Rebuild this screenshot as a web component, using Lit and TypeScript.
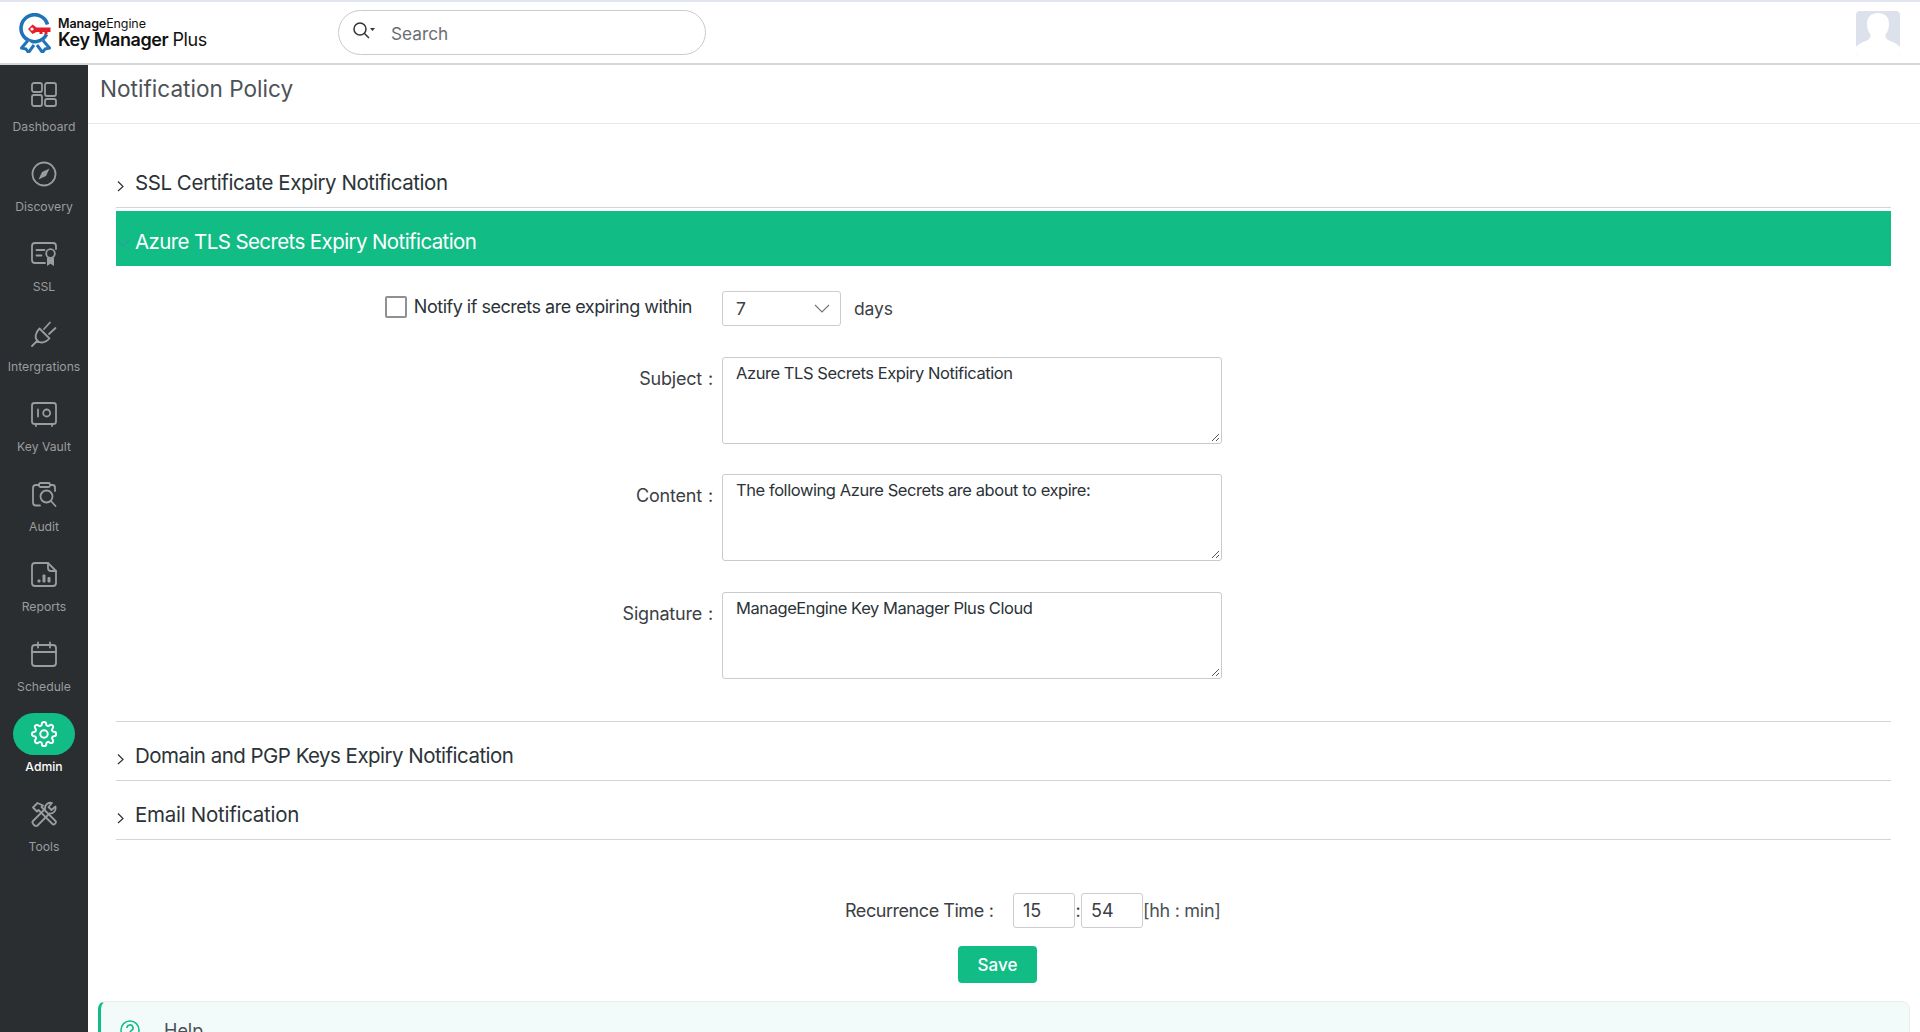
import { LitElement, html, css, svg } from "lit";
import { customElement } from "lit/decorators.js";

const gear = svg`<g transform="translate(2.8 2.8) scale(1.1)"><circle cx="12" cy="12" r="3.4"/><path d="M19.4 15a1.65 1.65 0 0 0 .33 1.82l.06.06a2 2 0 0 1 0 2.83 2 2 0 0 1-2.83 0l-.06-.06a1.65 1.65 0 0 0-1.82-.33 1.65 1.65 0 0 0-1 1.51V21a2 2 0 0 1-2 2 2 2 0 0 1-2-2v-.09A1.65 1.65 0 0 0 9 19.4a1.65 1.65 0 0 0-1.82.33l-.06.06a2 2 0 0 1-2.83 0 2 2 0 0 1 0-2.83l.06-.06a1.65 1.65 0 0 0 .33-1.82 1.65 1.65 0 0 0-1.51-1H3a2 2 0 0 1-2-2 2 2 0 0 1 2-2h.09A1.65 1.65 0 0 0 4.6 9a1.65 1.65 0 0 0-.33-1.82l-.06-.06a2 2 0 0 1 0-2.83 2 2 0 0 1 2.83 0l.06.06a1.65 1.65 0 0 0 1.82.33H9a1.65 1.65 0 0 0 1-1.51V3a2 2 0 0 1 2-2 2 2 0 0 1 2 2v.09a1.65 1.65 0 0 0 1 1.51 1.65 1.65 0 0 0 1.82-.33l.06-.06a2 2 0 0 1 2.83 0 2 2 0 0 1 0 2.83l-.06.06a1.65 1.65 0 0 0-.33 1.82V9a1.65 1.65 0 0 0 1.51 1H21a2 2 0 0 1 2 2 2 2 0 0 1-2 2h-.09a1.65 1.65 0 0 0-1.51 1z"/></g>`;

const NAV = [
  { label: "Dashboard", icon: svg`<rect x="4" y="5" width="10" height="9" rx="2"/><rect x="17" y="5" width="11" height="13" rx="2"/><rect x="4" y="17" width="10" height="11" rx="2"/><rect x="17" y="21" width="11" height="7" rx="2"/>` },
  { label: "Discovery", icon: svg`<circle cx="16" cy="16" r="11.5"/><path class="fill" d="M21.5 10.5 18 18l-7.5 3.500L14 14z"/>` },
  { label: "SSL", icon: svg`<path d="M17 25H7a3 3 0 0 1-3-3V8a3 3 0 0 1 3-3h18a3 3 0 0 1 3 3v3"/><path d="M8.500 12h8M8.500 17.500h5"/><circle cx="22.500" cy="15.500" r="4.300"/><path class="fill" d="M19 19.500V28l3.500-2.200L26 28v-8.500l-3.500 1z"/>` },
  { label: "Intergrations", icon: svg`<path d="M4 28l5.500-5.500M11.500 10.500l10 10c-4 4.500-9 5-12 2.500-3-3-2.500-8 2-12.500zM16 11l6-6.500M21 16l6.500-6"/>` },
  { label: "Key Vault", icon: svg`<rect x="4" y="5" width="24" height="21" rx="2.500"/><path d="M8 26v2M24 26v2M10 11.500v7"/><circle cx="18.700" cy="15" r="3.500"/>` },
  { label: "Audit", icon: svg`<path d="M11 7H8a3 3 0 0 0-3 3v14.500a3 3 0 0 0 3 3h4M22 7h2.500a2.500 2.500 0 0 1 2.500 2.500V13"/><rect x="11" y="5" width="11" height="4" rx="1.500"/><circle cx="18.500" cy="18.500" r="6"/><path d="M23 23l4.500 5"/>` },
  { label: "Reports", icon: svg`<path d="M20 5H7a3 3 0 0 0-3 3v17a3 3 0 0 0 3 3h18a3 3 0 0 0 3-3V13z"/><path d="M20 5v5a3 3 0 0 0 3 3h5"/><rect class="fill" x="9.500" y="21.500" width="3" height="3" rx="1"/><rect class="fill" x="14.500" y="16.500" width="3" height="8" rx="1"/><rect class="fill" x="19.500" y="19" width="3" height="5.500" rx="1"/>` },
  { label: "Schedule", icon: svg`<rect x="4" y="7" width="24" height="21" rx="3"/><path d="M4 14h24M10 4.500v5M22 4.500v5"/>` },
  { label: "Admin", icon: gear, active: true },
  { label: "Tools", icon: svg`<path d="M9.500 5 5 9.500l4 4 1.500-1.500 14 14c1.500 1.500 4.500-1.500 3-3l-14-14 1.500-1.500z"/><path d="M27.500 8.500 23.500 12 20.500 9l3.500-4c-3.500-1-7.500 1.500-7 6l-12 12c-2 2 2.500 6.500 4.500 4.500l12-12c4.500.5 7-3.500 6-7z"/>` },
];

@customElement("app-root")
export class AppRoot extends LitElement {
  static styles = css`
    :host { display: block; width: 1920px; height: 1032px; overflow: hidden; background: #fff; font-family: Inter, "Noto Sans", sans-serif; color: #2c3338; }
    .top { height: 65px; box-sizing: border-box; border-top: 2px solid #e2e6f1; border-bottom: 2px solid #d5d7d9; display: flex; align-items: center; background: #fff; }
    .logo { margin-left: 19px; width: 33px; height: 40px; flex: none; }
    .brand { margin-left: 6px; width: 280px; flex: none; color: #111; }
    .brand .me { font-size: 12.500px; line-height: 14px; font-weight: 600; letter-spacing: -.1px; }
    .brand .me span { font-weight: 400; }
    .brand .km { font-size: 18px; line-height: 18px; font-weight: 600; letter-spacing: -.4px; }
    .brand .km span { font-weight: 400; }
    .search { width: 368px; height: 45px; box-sizing: border-box; border: 1px solid #c8cacc; border-radius: 23px; display: flex; align-items: center; padding-left: 13px; }
    .search svg { flex: none; margin-top: -3px; }
    .search span { margin-left: 15px; font-size: 17.250px; color: #6b6e70; padding-top: 1px; }
    .avatar { margin-left: auto; margin-right: 20px; width: 44px; height: 44px; flex: none; }
    .body { display: flex; height: 967px; }
    .side { width: 88px; flex: none; background: #2b2e31; display: flex; flex-direction: column; padding-top: 6px; box-sizing: border-box; }
    .item { height: 80px; display: flex; flex-direction: column; align-items: center; color: #9a9c9e; font-size: 12.200px; }
    .pill { width: 62px; height: 42px; display: flex; align-items: center; justify-content: center; border-radius: 21px; margin-top: 2px; }
    .item svg { width: 32px; height: 32px; fill: none; stroke: currentColor; stroke-width: 1.800; stroke-linecap: round; stroke-linejoin: round; }
    .item svg .fill { fill: currentColor; stroke: none; }
    .item .lb { margin-top: 3.500px; line-height: 16px; }
    .item.on { color: #fff; font-weight: 500; }
    .item.on .pill { background: #11bc85; }
    main { flex: 1; min-width: 0; }
    h1 { margin: 0; height: 59px; box-sizing: border-box; border-bottom: 1px solid #e8e9ea; padding: 10px 0 0 12px; font-size: 22.600px; line-height: 28px; font-weight: 400; color: #4d5257; }
    .content { padding: 25px 29px 0 28px; }
    .row { height: 59px; box-sizing: border-box; border-bottom: 1px solid #d2d4d6; display: flex; align-items: center; font-size: 20.500px; letter-spacing: -.45px; padding-top: 9px; color: #2c3338; }
    .row.tight { letter-spacing: -.53px; }
    .row.loose { letter-spacing: -.27px; }
    .row svg { width: 19px; height: 12px; flex: none; margin-top: 6px; }
    .head { margin-top: 3px; height: 55px; box-sizing: border-box; padding-top: 6px; background: #11bc85; color: #fff; display: flex; align-items: center; font-size: 20.500px; letter-spacing: -.6px; }
    .head svg { width: 19px; height: 12px; flex: none; margin-top: 2px; }
    .form { display: grid; grid-template-columns: 597px 500px; column-gap: 9px; padding-top: 25px; height: 456px; box-sizing: border-box; align-content: start; border-bottom: 1px solid #d2d4d6; font-size: 18px; }
    .notify { display: flex; justify-content: flex-end; align-items: center; height: 31px; padding-right: 21px; gap: 7px; letter-spacing: -.49px; }
    .check { width: 18px; height: 18px; border: 2px solid #8e9193; border-radius: 2px; }
    .fld { display: flex; align-items: center; height: 35px; gap: 13px; font-size: 17.500px; color: #3d4246; letter-spacing: -.1px; }
    .fld span { margin-top: -1px; }
    .select { width: 119px; height: 35px; box-sizing: border-box; border: 1px solid #ccc; border-radius: 3px; display: flex; align-items: center; justify-content: space-between; padding: 0 10px 0 13px; }
    .lab { text-align: right; padding-top: 11px; line-height: 22px; margin-top: 30.500px; color: #3b4044; letter-spacing: -.2px; }
    .colon { margin: 0 0 0 6px; }
    .ta { margin-top: 30.500px; height: 87px; box-sizing: border-box; border: 1px solid #c8cacc; border-radius: 3px; padding: 4px 13px; font-size: 16.500px; letter-spacing: -.43px; line-height: 22px; position: relative; color: #2c3338; }
    .grip { position: absolute; right: 1px; bottom: 1px; width: 10px; height: 10px; }
    .rec { height: 72px; display: flex; align-items: center; margin-top: 34px; padding-left: 729px; font-size: 18px; color: #3b4044; }
    .rec .rl { width: 168px; letter-spacing: -.45px; flex: none; }
    .rec .colon { margin: 0 0 0 5px; }
    .tin { width: 62px; height: 35px; box-sizing: border-box; border: 1px solid #ccc; border-radius: 3px; padding-left: 9px; line-height: 33px; }
    .sep { width: 6px; text-align: center; }
    .unit { color: #4a5055; letter-spacing: -.3px; }
    .saveRow { display: flex; padding-left: 842px; }
    .save { width: 79px; height: 37px; background: #11bc85; color: #fff; border-radius: 4px; display: flex; align-items: center; justify-content: center; font-size: 17px; font-weight: 500; }
    .help { margin: 18px 10px 0 10px; height: 80px; box-sizing: border-box; background: #f2fbf9; border: 1px solid #eceeee; border-left: 3px solid #11bc85; border-radius: 8px; display: flex; align-items: flex-start; padding: 18px 0 0 19px; font-size: 18px; color: #4a4f54; }
    .help svg { flex: none; width: 20px; height: 20px; }
    .help span { margin-left: 24px; line-height: 22px; }
  `;

  private row(t: string, cls = "") {
    return html`<div class="row ${cls}"><svg viewBox="0 0 19 12"><path d="M2 1.500 7 6.500 2 11" fill="none" stroke="#2c3338" stroke-width="1.200"/></svg><span>${t}</span></div>`;
  }

  private grip() {
    return html`<svg class="grip" viewBox="0 0 10 10"><path d="M9 2 2 9M9 6 6 9" stroke="#555" stroke-width="1"/></svg>`;
  }

  render() {
    return html`
      <div class="top">
        <svg class="logo" viewBox="0 0 33 40">
          <path d="M28.500 11.500A13.500 13.500 0 1 0 27.500 21.500" fill="none" stroke="#1f74b8" stroke-width="3.600"/>
          <path d="M9 27.500 2.500 35 7 36l2.500 3.500L15 32M24 27.500 30.500 35 26 36l-2.500 3.500L18 32" fill="#fff" stroke="#1f74b8" stroke-width="3" stroke-linejoin="round"/>
          <path d="M9 16l4.500-4.500 4 3h14v4.500h-3v2.500h-3v-2.500h-2v2h-3v-2h-3l-4 2z" fill="#e3202a"/>
          <circle cx="13" cy="16" r="1.600" fill="#fff"/>
        </svg>
        <div class="brand"><div class="me">Manage<span>Engine</span></div><div class="km">Key Manager <span>Plus</span></div></div>
        <div class="search">
          <svg width="24" height="20" viewBox="0 0 24 20"><circle cx="8" cy="8" r="6" fill="none" stroke="#333" stroke-width="1.500"/><path d="M12.500 12.500 17 17" stroke="#333" stroke-width="1.500" fill="none"/><path d="M18 7h5l-2.500 3z" fill="#333"/></svg>
          <span>Search</span>
        </div>
        <svg class="avatar" viewBox="0 0 44 44">
          <path d="M4 0h36a4 4 0 0 1 4 4v36a4 4 0 0 1-4 4H4a4 4 0 0 1-4-4V4a4 4 0 0 1 4-4z" fill="#dde1ec"/>
          <path d="M22 2c6.500 0 11 3.500 11 11 0 4-1 7-3 10-1.500 2 0 5 3 6.500 5 2 8 3 11 6.500v4a4 4 0 0 1-4 4H4a4 4 0 0 1-4-4v-4c3-3.500 6-4.500 11-6.500 3-1.500 4.500-4.500 3-6.500-2-3-3-6-3-10 0-7.500 4.500-11 11-11z" fill="#fff"/>
        </svg>
      </div>
      <div class="body">
        <nav class="side">
          ${NAV.map((n) => html`<div class="item ${n.active ? "on" : ""}"><div class="pill"><svg viewBox="0 0 32 32">${n.icon}</svg></div><div class="lb">${n.label}</div></div>`)}
        </nav>
        <main>
          <h1>Notification Policy</h1>
          <div class="content">
            ${this.row("SSL Certificate Expiry Notification")}
            <div class="head"><svg viewBox="0 0 19 12"><path d="M1.500 3.500 7 9 12.500 3.500" fill="none" stroke="#2f9fa0" stroke-width="1.200"/></svg><span>Azure TLS Secrets Expiry Notification</span></div>
            <div class="form">
              <div class="notify"><div class="check"></div><span>Notify if secrets are expiring within</span></div>
              <div class="fld"><div class="select"><span>7</span><svg width="16" height="9" viewBox="0 0 16 9"><path d="M1 1l7 7 7-7" fill="none" stroke="#777" stroke-width="1.200"/></svg></div><span>days</span></div>
              <div class="lab">Subject<span class="colon">:</span></div>
              <div class="ta">Azure TLS Secrets Expiry Notification${this.grip()}</div>
              <div class="lab">Content<span class="colon">:</span></div>
              <div class="ta">The following Azure Secrets are about to expire:${this.grip()}</div>
              <div class="lab">Signature<span class="colon">:</span></div>
              <div class="ta">ManageEngine Key Manager Plus Cloud${this.grip()}</div>
            </div>
            ${this.row("Domain and PGP Keys Expiry Notification", "tight")}
            ${this.row("Email Notification", "loose")}
            <div class="rec"><span class="rl">Recurrence Time<span class="colon">:</span></span><div class="tin">15</div><span class="sep">:</span><div class="tin">54</div><span class="unit">[hh : min]</span></div>
            <div class="saveRow"><div class="save">Save</div></div>
          </div>
          <div class="help">
            <svg viewBox="0 0 20 20"><circle cx="10" cy="10" r="9" fill="none" stroke="#11bc85" stroke-width="1.500"/><path d="M7 8a3 3 0 1 1 4.500 2.500c-1 .6-1.500 1-1.500 2.500" fill="none" stroke="#11bc85" stroke-width="1.600"/><circle cx="10" cy="15.500" r="1" fill="#11bc85"/></svg>
            <span>Help</span>
          </div>
        </main>
      </div>`;
  }
}
